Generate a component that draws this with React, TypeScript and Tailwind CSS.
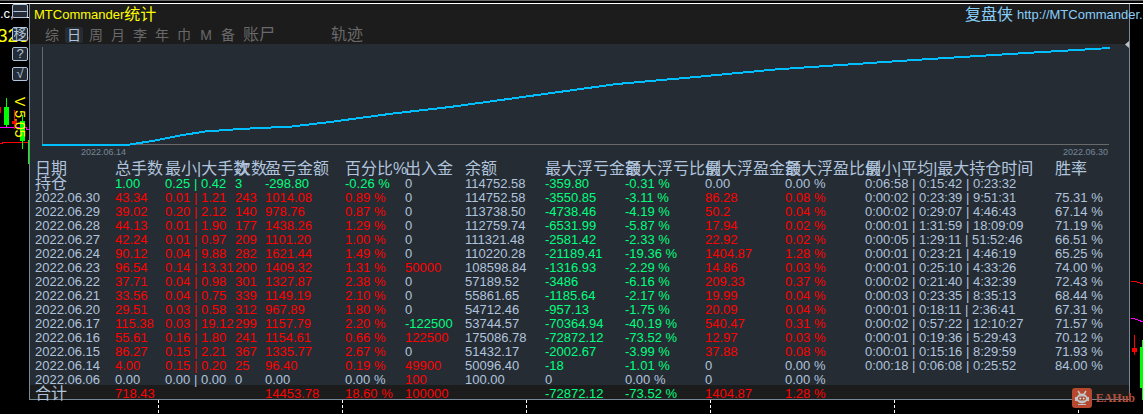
import clsx from "clsx";

const columns = [
    { label: "日期", width: "w-20" },
    { label: "总手数", width: "w-[50px]" },
    { label: "最小|大手数", width: "w-[70px]" },
    { label: "次数", width: "w-[30px]" },
    { label: "盈亏金额", width: "w-20" },
    { label: "百分比%", width: "w-[60px]" },
    { label: "出入金", width: "w-[60px]" },
    { label: "余额", width: "w-20" },
    { label: "最大浮亏金额", width: "w-20" },
    { label: "最大浮亏比例", width: "w-20" },
    { label: "最大浮盈金额", width: "w-20" },
    { label: "最大浮盈比例", width: "w-20" },
    { label: "最小|平均|最大持仓时间", width: "w-[190px]" },
    { label: "胜率", width: "w-auto" },
];

const rows = [
    ["持仓", "1.00", "0.25 | 0.42", "3", "-298.80", "-0.26 %", "0", "114752.58", "-359.80", "-0.31 %", "0.00", "0.00 %", "0:06:58 | 0:15:42 | 0:23:32", ""],
    ["2022.06.30", "43.34", "0.01 | 1.21", "243", "1014.08", "0.89 %", "0", "114752.58", "-3550.85", "-3.11 %", "86.28", "0.08 %", "0:00:02 | 0:23:39 | 9:51:31", "75.31 %"],
    ["2022.06.29", "39.02", "0.20 | 2.12", "140", "978.76", "0.87 %", "0", "113738.50", "-4738.46", "-4.19 %", "50.2", "0.04 %", "0:00:02 | 0:29:07 | 4:46:43", "67.14 %"],
    ["2022.06.28", "44.13", "0.01 | 1.90", "177", "1438.26", "1.29 %", "0", "112759.74", "-6531.99", "-5.87 %", "17.94", "0.02 %", "0:00:01 | 1:31:59 | 18:09:09", "71.19 %"],
    ["2022.06.27", "42.24", "0.01 | 0.97", "209", "1101.20", "1.00 %", "0", "111321.48", "-2581.42", "-2.33 %", "22.92", "0.02 %", "0:00:05 | 1:29:11 | 51:52:46", "66.51 %"],
    ["2022.06.24", "90.12", "0.04 | 9.88", "282", "1621.44", "1.49 %", "0", "110220.28", "-21189.41", "-19.36 %", "1404.87", "1.28 %", "0:00:01 | 0:23:21 | 4:46:19", "65.25 %"],
    ["2022.06.23", "96.54", "0.14 | 13.31", "200", "1409.32", "1.31 %", "50000", "108598.84", "-1316.93", "-2.29 %", "14.86", "0.03 %", "0:00:01 | 0:25:10 | 4:33:26", "74.00 %"],
    ["2022.06.22", "37.71", "0.04 | 0.98", "301", "1327.87", "2.38 %", "0", "57189.52", "-3486", "-6.16 %", "209.33", "0.37 %", "0:00:02 | 0:21:40 | 4:32:39", "72.43 %"],
    ["2022.06.21", "33.56", "0.04 | 0.75", "339", "1149.19", "2.10 %", "0", "55861.65", "-1185.64", "-2.17 %", "19.99", "0.04 %", "0:00:03 | 0:23:35 | 8:35:13", "68.44 %"],
    ["2022.06.20", "29.51", "0.03 | 0.58", "312", "967.89", "1.80 %", "0", "54712.46", "-957.13", "-1.75 %", "20.09", "0.04 %", "0:00:01 | 0:18:11 | 2:36:41", "67.31 %"],
    ["2022.06.17", "115.38", "0.03 | 19.12", "299", "1157.79", "2.20 %", "-122500", "53744.57", "-70364.94", "-40.19 %", "540.47", "0.31 %", "0:00:02 | 0:57:22 | 12:10:27", "71.57 %"],
    ["2022.06.16", "55.61", "0.16 | 1.80", "241", "1154.61", "0.66 %", "122500", "175086.78", "-72872.12", "-73.52 %", "12.97", "0.03 %", "0:00:01 | 0:19:36 | 5:29:43", "70.12 %"],
    ["2022.06.15", "86.27", "0.15 | 2.21", "367", "1335.77", "2.67 %", "0", "51432.17", "-2002.67", "-3.99 %", "37.88", "0.08 %", "0:00:01 | 0:15:16 | 8:29:59", "71.93 %"],
    ["2022.06.14", "4.00", "0.15 | 0.20", "25", "96.40", "0.19 %", "49900", "50096.40", "-18", "-1.01 %", "0", "0.00 %", "0:00:18 | 0:06:08 | 0:25:52", "84.00 %"],
    ["2022.06.06", "0.00", "0.00 | 0.00", "0", "0.00", "0.00 %", "100", "100.00", "0", "0.00 %", "0", "0.00 %", "", ""],
];

const total = ["合计", "718.43", "", "", "14453.78", "18.60 %", "100000", "", "-72872.12", "-73.52 %", "1404.87", "1.28 %", "", ""];

const periods = ["综", "日", "周", "月", "李", "年", "巾", "M", "备"];

const neutralColumns = [0, 7, 12, 13];

// lots and trade count take the colour of the row's profit
function tone(row: string[], index: number) {
    if (neutralColumns.includes(index)) return "text-[#b0c4de]";
    const value = parseFloat(index < 4 ? row[4] : row[index]);
    if (value > 0) return "text-[#ff0000]";
    if (value < 0) return "text-[#00ff7f]";
    return "text-[#b0c4de]";
}

function Row({ row }: { row: string[] }) {
    return (
        <tr>
            {row.map((value, i) => (
                <td key={i} className={clsx("p-0", tone(row, i))}>
                    <div
                        className={clsx(
                            "h-3.5 leading-[18px] whitespace-nowrap",
                            i === 0 && !value.startsWith("2") ? "text-[16px]" : "text-[13px]"
                        )}
                    >
                        {value}
                    </div>
                </td>
            ))}
        </tr>
    );
}

function StatsTable() {
    return (
        <table className="w-full table-fixed border-collapse text-left">
            <colgroup>
                {columns.map((column) => (
                    <col key={column.label} className={column.width} />
                ))}
            </colgroup>
            <thead>
                <tr>
                    {columns.map((column) => (
                        <th key={column.label} className="p-0 text-[16px] font-normal">
                            <div className="h-[15px] leading-[18px] whitespace-nowrap">{column.label}</div>
                        </th>
                    ))}
                </tr>
            </thead>
            <tbody>
                {rows.map((row) => (
                    <Row key={row[0]} row={row} />
                ))}
            </tbody>
            <tfoot>
                <Row row={total} />
            </tfoot>
        </table>
    );
}

function BalanceChart() {
    return (
        <div className="h-[116px]">
            <svg className="block h-[103px] w-full" viewBox="0 0 1099 103" preserveAspectRatio="none" fill="none">
                <path d="M12.5 3V100.5H1079" stroke="#696969" />
                <path
                    d="M12 101H97L125 96.500L150 91.500L175 87.500L210 85L262 82.500L300 78L363 69.500L420 63L500 52L587 40L660 33.500L745 25.500L840 19L900 15L996 9L1080 4"
                    stroke="#00bfff"
                    strokeWidth="2"
                    shapeRendering="crispEdges"
                />
            </svg>
            <div className="flex justify-between pr-[21px] pl-[51px] text-[9px] leading-[11px] text-[#778899]">
                <span>2022.06.14</span>
                <span>2022.06.30</span>
            </div>
        </div>
    );
}

function SideButton({ label, children }: { label: string; children: string }) {
    return (
        <button
            type="button"
            aria-label={label}
            className="flex h-3.5 w-4 items-center justify-center overflow-hidden rounded-xs border border-[#b0c4de] bg-[#262c35] text-[13px] leading-3 text-[#b0c4de]"
        >
            {children}
        </button>
    );
}

function Sidebar() {
    return (
        <aside className="relative w-[29px] shrink-0">
            <svg className="absolute top-0 left-0 h-40 w-[29px]" viewBox="0 0 29 160" shapeRendering="crispEdges">
                <path d="M0 123.500H26V125.500H29" stroke="#ff00ff" fill="none" />
                <path d="M0 139.500H2V138.500H29" stroke="#ff0000" fill="none" />
                <path d="M0 103H1V109H0zM14 106H15V125H14zM12 117H17V120H12z" fill="#ff0000" />
                <path d="M6 94H7V123H6zM4 103H9V121H4zM22 111H23V145H22zM20 117H25V137H20zM28 136H29V160H28z" fill="#00ff00" />
            </svg>
            <div className="absolute top-0 left-0 text-[13px] leading-5 text-white">.c,H1</div>
            <div className="absolute top-5 left-[-3px] text-[19px] leading-6 text-[#ffff00]">328</div>
            <div className="relative flex flex-col items-end gap-1.5 pr-px">
                <div className="mb-[3px]">
                    <SideButton label="最小化">—</SideButton>
                </div>
                <SideButton label="移动">移</SideButton>
                <SideButton label="帮助">?</SideButton>
                <SideButton label="确认">√</SideButton>
            </div>
            <div className="relative mt-4 ml-3 text-[14px] leading-4 whitespace-nowrap text-[#ffff00] [writing-mode:vertical-rl]">
                V 5.05
            </div>
        </aside>
    );
}

function PanelHeader() {
    return (
        <header className="bg-[#1c1c1c]">
            <div className="flex h-[22px] items-center justify-between pl-1 whitespace-nowrap">
                <h1 className="flex items-center leading-5 text-[#ffff00]">
                    MTCommander<span className="text-[16px] leading-5">统计</span>
                </h1>
                <a href="http://MTCommander.com" className="flex w-[164px] items-center gap-1 text-[#87cefa]">
                    <span className="text-[16px] leading-5">复盘侠</span>
                    <span>http://MTCommander.com</span>
                </a>
            </div>
            <nav className="flex h-[18px] items-center pl-[13px] text-[14px] leading-4 text-[#696969]">
                {periods.map((period) => (
                    <button
                        key={period}
                        type="button"
                        className={clsx(
                            "mr-1 flex h-4 w-[18px] items-center justify-center rounded-xs",
                            period === "日" && "bg-[#262c33] text-[#b0c4de]"
                        )}
                    >
                        {period}
                    </button>
                ))}
                <button type="button" className="ml-0.5 text-[16px] leading-4">
                    账尸
                </button>
                <button type="button" className="ml-14 text-[16px] leading-4">
                    轨迹
                </button>
            </nav>
        </header>
    );
}

function Watermark() {
    return (
        <div className="absolute right-2 bottom-1.5 flex items-center gap-1 font-['Liberation_Serif',serif] text-[12px] leading-5 font-bold text-[#b4513d]">
            <svg className="size-5" viewBox="0 0 20 20">
                <rect width="20" height="20" rx="3" fill="#b5482f" />
                <path d="M6 3L8 6M14 3L12 6" stroke="#c5c8c8" strokeWidth="1.500" />
                <ellipse cx="10" cy="10.500" rx="5.500" ry="5" fill="#bfc5c5" />
                <path d="M3 9H5V13H3zM15 9H17V13H15z" fill="#bfc5c5" />
                <rect x="6" y="8.500" width="8" height="4" rx="2" fill="#a8452f" />
                <circle cx="8.300" cy="10.500" r="1" fill="#d7dcdc" />
                <circle cx="11.700" cy="10.500" r="1" fill="#d7dcdc" />
                <path d="M6 16.500H14" stroke="#bfc5c5" />
            </svg>
            EAHub
        </div>
    );
}

export default function App() {
    return (
        <main className="relative min-h-screen overflow-hidden bg-black font-['Liberation_Sans','Noto_Sans_CJK_SC',sans-serif] text-[13px] text-[#b0c4de]">
            <div className="h-1 border-t border-b border-t-[#696969] border-b-white" />
            <div className="flex items-start">
                <Sidebar />
                <section className="relative min-w-0 flex-1 border-x border-b border-[#778899] bg-[#262c33]">
                    <PanelHeader />
                    <svg className="absolute top-[37px] right-0 h-[7px] w-1" viewBox="0 0 4 7">
                        <path d="M4 0V7L0 3.500z" fill="#c0c0c0" />
                    </svg>
                    <BalanceChart />
                    <div className="bg-[linear-gradient(to_top,#1c1c1c_14px,transparent_14px)] pl-[5px]">
                        <StatsTable />
                    </div>
                </section>
                <svg className="h-[396px] w-[13px] shrink-0" viewBox="0 0 13 396" shapeRendering="crispEdges" fill="none">
                    <path d="M1 277.500H6L13 280" stroke="#ff0000" />
                    <path d="M1 314.500H4L13 318" stroke="#ff00ff" />
                    <path d="M4 331H5V351H4zM2 344H7V348H2z" fill="#ff0000" />
                    <path d="M10 343H13V384H10zM12 336H13V396H12z" fill="#00ff00" />
                </svg>
            </div>
            {/* period separators of the chart underneath */}
            <div className="flex h-3.5 gap-[183px] pl-[158px]">
                {[0, 1, 2, 3, 4, 5].map((i) => (
                    <div
                        key={i}
                        className="w-px shrink-0 bg-[repeating-linear-gradient(to_bottom,white_0,white_3px,transparent_3px,transparent_5px)]"
                    />
                ))}
            </div>
            <Watermark />
        </main>
    );
}
